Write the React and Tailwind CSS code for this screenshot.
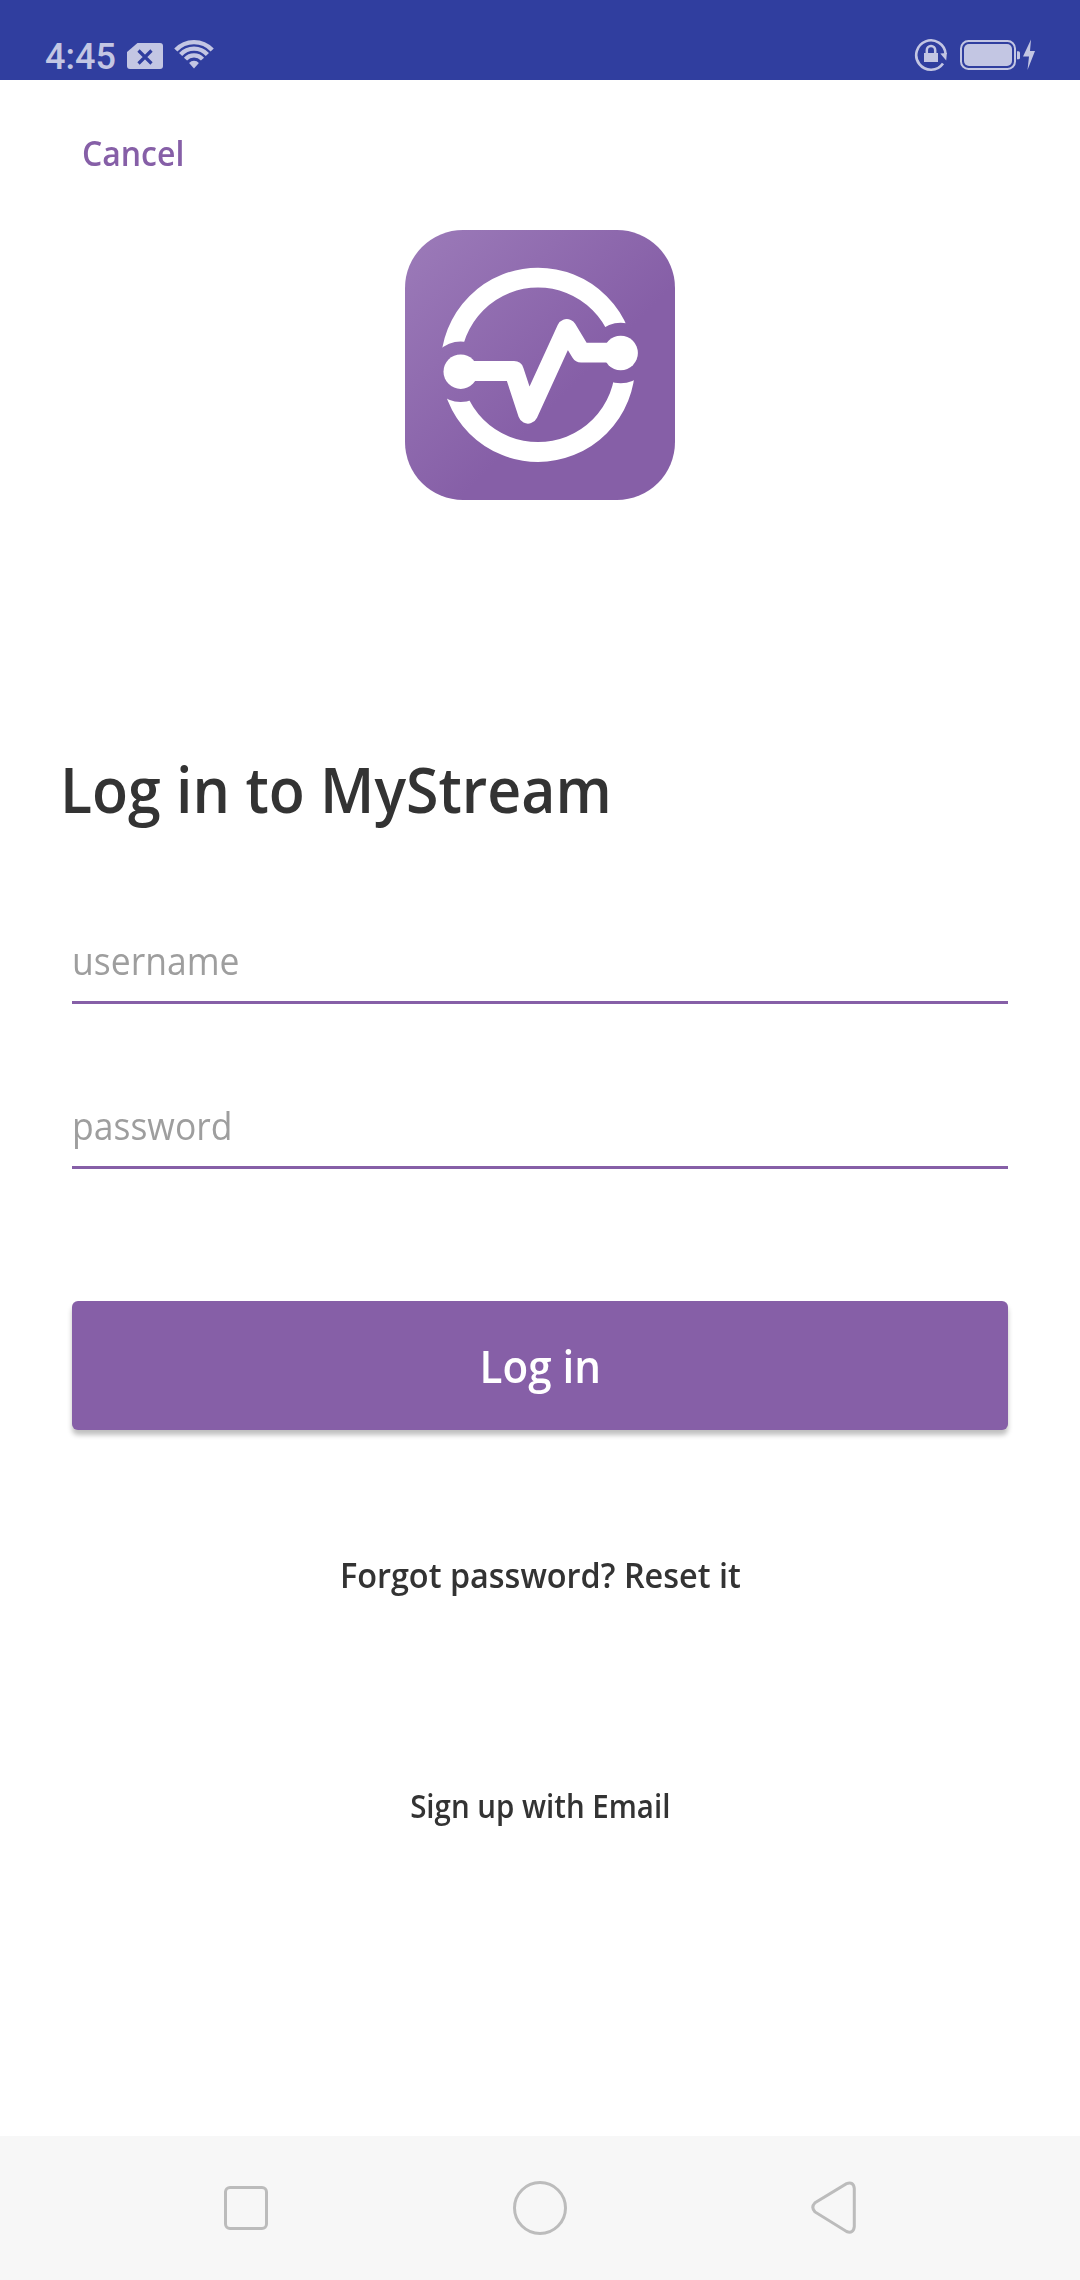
const ink = '#c3c6e3';

function StatusBar() {
  return (
    <header className="flex h-20 w-full justify-between bg-[#303e9f] pt-[34px] pr-[43px] pl-[45px]">
      <div className="flex items-start">
        <span className="w-[82px] pt-px whitespace-nowrap font-['Roboto'] text-[36px] leading-[44px] font-medium text-[#c3c6e3]">4:45</span>
        <svg width="36" height="26" viewBox="0 0 36 26" className="mt-[9px]">
          <path d="M10.5 0H33a3 3 0 0 1 3 3v20a3 3 0 0 1-3 3H3a3 3 0 0 1-3-3V9z" fill={ink} />
          <path d="M11.500 7.500l13 13M24.500 7.500l-13 13" stroke="#303e9f" strokeWidth="3.200" />
        </svg>
        <svg width="40" height="30" viewBox="0 0 40 30" className="mt-[5px] ml-[11px]">
          <g fill="none" stroke={ink} strokeWidth="4.300">
            <path d="M1.800 11A24.900 24.900 0 0 1 38.200 11" />
            <path d="M6.600 15.500A18.300 18.300 0 0 1 33.400 15.500" />
            <path d="M11.500 20.100A11.600 11.600 0 0 1 28.500 20.100" />
          </g>
          <path d="M20 29.500l-4.900-5.600a6.800 6.800 0 0 1 9.800 0z" fill={ink} />
        </svg>
      </div>
      <div className="flex items-start">
        <svg width="34" height="34" viewBox="0 0 34 34" className="mt-[4px]">
          <path d="M29 25.500A14.700 14.700 0 1 1 31.600 16" fill="none" stroke={ink} strokeWidth="2.600" />
          <path d="M26.300 15.500L32.900 15L32.200 22.500z" fill={ink} />
          <rect x="10" y="15" width="14" height="9" fill={ink} />
          <path d="M12.800 15.500v-3.300a4.200 4.200 0 0 1 8.400 0v3.300" fill="none" stroke={ink} strokeWidth="2.500" />
        </svg>
        <svg width="78" height="34" viewBox="0 0 78 34" className="mt-[4px] ml-[11px]">
          <rect x="2" y="3" width="54" height="28" rx="7.500" fill="none" stroke={ink} strokeWidth="2" />
          <rect x="5" y="6" width="48" height="22" rx="5" fill={ink} />
          <path d="M58 13.300h1.500a1.500 1.500 0 0 1 1.500 1.500v5a1.500 1.500 0 0 1-1.500 1.500H58z" fill={ink} />
          <path d="M72 1.500L64 18.600h6L68.500 32L76 13h-5z" fill={ink} />
        </svg>
      </div>
    </header>
  );
}

function Logo() {
  return (
    <svg width="270" height="270" viewBox="0 0 270 270" className="mx-auto mt-[56px]">
      <defs>
        <linearGradient id="tile" x1="0" y1="0" x2="1" y2="1">
          <stop offset="0" stopColor="#9c7bb9" />
          <stop offset="0.6" stopColor="#865fa7" />
          <stop offset="1" stopColor="#865fa7" />
        </linearGradient>
        <mask id="gaps" maskUnits="userSpaceOnUse" x="0" y="0" width="270" height="270">
          <rect width="270" height="270" fill="white" />
          <circle cx="55.700" cy="141.700" r="30.300" fill="black" />
          <circle cx="215.700" cy="123" r="30.300" fill="black" />
        </mask>
      </defs>
      <rect width="270" height="270" rx="58" fill="url(#tile)" />
      <circle cx="133" cy="134.800" r="87.200" fill="none" stroke="white" strokeWidth="19.800" mask="url(#gaps)" />
      <path d="M56 141H109L123 183.700L161.700 99L176 122.600H215" fill="none" stroke="white" strokeWidth="19.800" strokeLinejoin="round" />
      <circle cx="55.700" cy="141.700" r="17.200" fill="white" />
      <circle cx="215.700" cy="123" r="17.200" fill="white" />
    </svg>
  );
}

function Field({ label }) {
  return (
    <label className="flex h-[66px] items-start border-b-3 border-[#865fa7]">
      <span className="origin-left scale-x-[0.935] text-[38px] leading-[44px] whitespace-nowrap text-[#9e9e9e]">{label}</span>
    </label>
  );
}

function NavBar() {
  return (
    <footer className="flex h-36 items-center justify-between bg-[#f7f7f7] px-[219px]">
      <svg width="54" height="54" viewBox="0 0 54 54" fill="none" stroke="#bcbcbc" strokeWidth="3">
        <rect x="6.500" y="6.500" width="41" height="41" rx="4.500" />
      </svg>
      <svg width="54" height="54" viewBox="0 0 54 54" fill="none" stroke="#bcbcbc" strokeWidth="3">
        <circle cx="27" cy="27" r="25.500" />
      </svg>
      <svg width="54" height="54" viewBox="0 0 54 54" fill="none" stroke="#bcbcbc" strokeWidth="3">
        <path d="M8 21.700L39.500 2.700Q46.500 .2 47.300 7.500V45.500Q46.500 53 39.500 50.500L8 30.900Q3.600 26.300 8 21.700Z" />
      </svg>
    </footer>
  );
}

export default function App() {
  return (
    <div className="flex h-[2280px] w-[1080px] flex-col overflow-hidden bg-white font-['Open_Sans',sans-serif] text-[#333333]">
      <StatusBar />
      <main className="flex flex-1 flex-col">
        <button className="mt-[49px] ml-[82px] h-[45px] w-[110px] text-left text-[34px] leading-[48px] font-semibold whitespace-nowrap text-[#865fa7]">
          <span className="inline-block origin-left scale-x-[0.94]">Cancel</span>
        </button>
        <Logo />
        <h1 className="mt-[244px] ml-[60px] origin-left scale-x-[0.922] text-[64px] leading-[90px] font-semibold whitespace-nowrap">Log in to MyStream</h1>
        <form className="mx-[72px] flex flex-col">
          <div className="mt-[104px]"><Field label="username" /></div>
          <div className="mt-[99px]"><Field label="password" /></div>
          <button type="button" className="mt-[132px] flex h-[129px] items-center justify-center rounded-md bg-[#865fa7] pb-[2px] text-[46px] leading-none font-semibold text-white shadow-[0_5px_5px_rgba(0,0,0,0.25)]">
            <span className="scale-x-[0.916]">Log in</span>
          </button>
        </form>
        <button className="mt-[121px] h-[48px] text-[34px] leading-[48px] font-semibold whitespace-nowrap">
          <span className="inline-block scale-x-[0.953]">Forgot password? Reset it</span>
        </button>
        <button className="mt-[184px] h-[46px] text-[32px] leading-[46px] font-semibold whitespace-nowrap">
          <span className="inline-block scale-x-[0.921]">Sign up with Email</span>
        </button>
      </main>
      <NavBar />
    </div>
  );
}
